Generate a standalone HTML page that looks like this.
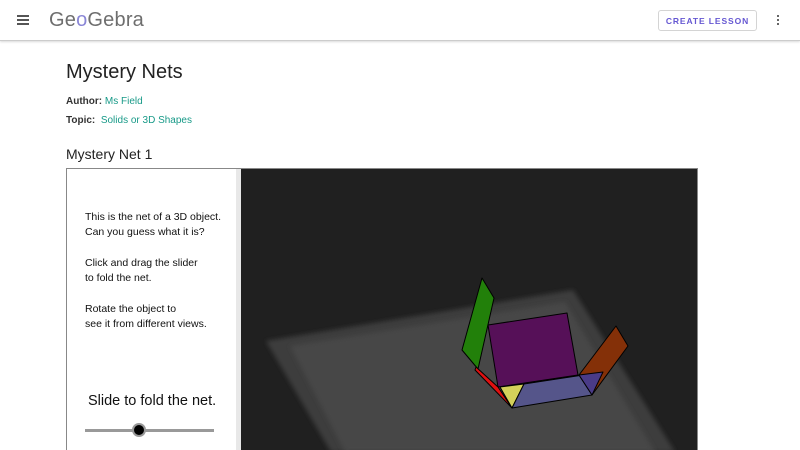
<!DOCTYPE html>
<html><head><style>
html,body{margin:0;width:800px;height:450px;overflow:hidden}
body{background:#fff;font-family:"Liberation Sans",sans-serif;position:relative}
.hdr{position:absolute;left:0;top:0;width:800px;height:40px;background:#fff;border-bottom:1px solid #ccc;box-shadow:0 1px 2px rgba(0,0,0,.15)}
.t{position:absolute;white-space:nowrap}
</style></head><body>
<div class="hdr">
<div style="position:absolute;left:17px;top:15px;width:12px;height:1.5px;background:#555;box-shadow:0 4px 0 #555,0 8px 0 #555"></div>
<div class="t" style="left:49px;top:9px;font-size:20px;color:#6e6e6e;letter-spacing:0.2px">Ge<span style="color:#8a86d6">o</span>Gebra</div>
<div style="position:absolute;left:658px;top:10px;width:99px;height:21px;border:1px solid #d4d4d4;border-radius:3px;box-sizing:border-box;color:#6557d2;font-size:8.5px;font-weight:bold;letter-spacing:.9px;text-align:center;line-height:20px">CREATE LESSON</div>
<div style="position:absolute;left:777px;top:15px;width:2px;height:2px;background:#666;box-shadow:0 4px 0 #666,0 8px 0 #666"></div>
</div>
<div class="t" style="left:66px;top:61px;font-size:20px;color:#222">Mystery Nets</div>
<div class="t" style="left:66px;top:96px;font-size:10px;color:#333"><b>Author:</b> <span style="color:#189a88">Ms Field</span></div>
<div class="t" style="left:66px;top:115px;font-size:10px;color:#333"><b>Topic:</b>&nbsp; <span style="color:#189a88">Solids or 3D Shapes</span></div>
<div class="t" style="left:66px;top:146px;font-size:14px;color:#222">Mystery Net 1</div>
<div style="position:absolute;left:66px;top:168px;width:632px;height:290px;border:1px solid #888;box-sizing:border-box;background:#fff"></div>
<div style="position:absolute;left:236px;top:169px;width:5px;height:281px;background:#e8e8e8"></div>
<div class="t" style="left:85px;top:210px;font-size:10.5px;line-height:15.3px;color:#111">This is the net of a 3D object.<br>Can you guess what it is?<br><br>Click and drag the slider<br>to fold the net.<br><br>Rotate the object to<br>see it from different views.</div>
<div class="t" style="left:88px;top:393px;font-size:14.5px;color:#111">Slide to fold the net.</div>
<div style="position:absolute;left:85px;top:429px;width:129px;height:3px;background:#999"></div>
<div style="position:absolute;left:132px;top:423px;width:10px;height:10px;border-radius:50%;background:#000;border:2px solid #999"></div>
<svg style="position:absolute;left:241px;top:169px" width="456" height="281" viewBox="241 169 456 281">
<rect x="241" y="169" width="456" height="281" fill="#202020"/>
<defs><filter id="b"><feGaussianBlur stdDeviation="2.5"/></filter></defs>
<polygon points="266,341 573,290 675,452 331,452" fill="#3e3e3e" filter="url(#b)"/>
<polygon points="290,346 565,302 655,452 345,452" fill="#474747" filter="url(#b)"/>
<g stroke="#000" stroke-width="1" stroke-linejoin="round">
<polygon points="482,278 494,298 478,369 462,350" fill="#22800a"/>
<polygon points="488,325 567,313 578,375 498,387" fill="#561058"/>
<polygon points="476,367 498,387 512,408 475,370" fill="#e01010"/>
<polygon points="500,387 524,384 512,408" fill="#d4d05a"/>
<polygon points="524,384 603,372 592,395 512,408" fill="#55558a"/>
<polygon points="616,326 628,346 592,395 579,375" fill="#843008"/>
<polygon points="579,375 603,372 592,395" fill="#4a3b88"/>
</g>
</svg>
</body></html>
